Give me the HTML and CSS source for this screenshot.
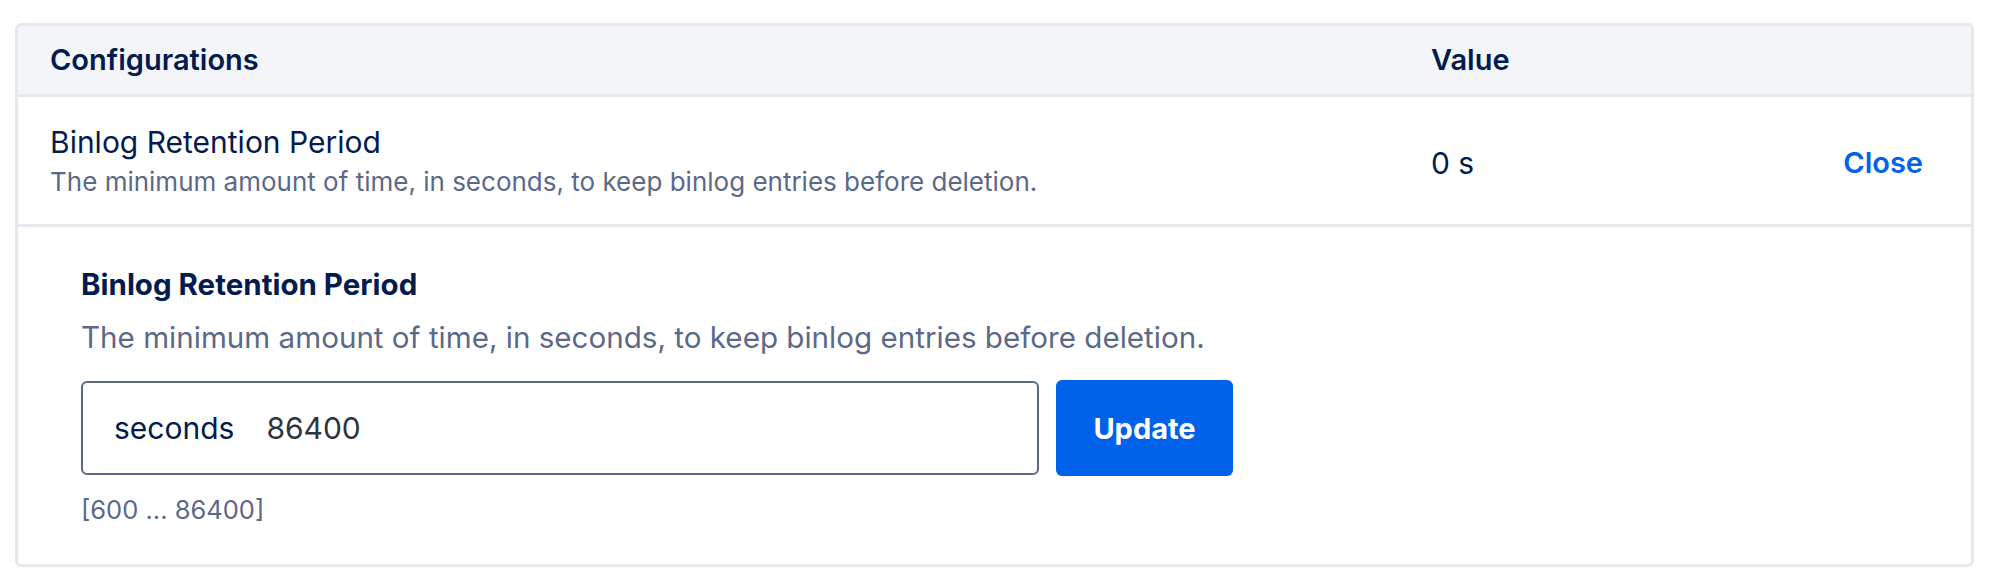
FILE: index.html
```html
<!DOCTYPE html>
<html lang="en">
<head>
<meta charset="utf-8">
<title>Configurations</title>
<link rel="stylesheet" href="styles.css">
</head>
<body>
<div class="card">
  <div class="row head">
    <div class="cell">Configurations</div>
    <div class="cell">Value</div>
  </div>
  <div class="row item">
    <div class="cell info">
      <div class="item-title">Binlog Retention Period</div>
      <div class="item-desc">The minimum amount of time, in seconds, to keep binlog entries before deletion.</div>
    </div>
    <div class="cell value">
      <span class="val">0 s</span>
      <a class="close" href="#">Close</a>
    </div>
  </div>
  <div class="editor">
    <div class="ed-title">Binlog Retention Period</div>
    <div class="ed-desc">The minimum amount of time, in seconds, to keep binlog entries before deletion.</div>
    <div class="ed-form">
      <label class="field">
        <span class="unit">seconds</span>
        <input class="num" type="text" value="86400">
      </label>
      <button class="btn" type="button">Update</button>
    </div>
    <div class="hint">[600 ... 86400]</div>
  </div>
</div>
</body>
</html>
```
FILE: styles.css
```css
* { box-sizing: border-box; }
html, body { background: #ffffff; }
body {
  margin: 0;
  padding: 23px 24px 0 15px;
  font-family: Inter, "Noto Sans", sans-serif;
  color: #031b4e;
}
.card {
  border: 3px solid #e5e8ed;
  border-radius: 6px;
  overflow: hidden;
  background: #ffffff;
}
.row {
  display: grid;
  grid-template-columns: 1fr 492px;
  align-items: center;
  padding: 0 48px 0 32px;
}
.head {
  height: 71px;
  background: #f3f5f9;
  border-bottom: 3px solid #e5e8ed;
  font-size: 29px;
  font-weight: 600;
  line-height: 36px;
}
.item {
  height: 130px;
  border-bottom: 3px solid #e5e8ed;
}
.item-title {
  font-size: 30px;
  line-height: 36px;
  font-weight: 400;
}
.item-desc {
  margin-top: 6px;
  font-size: 26px;
  line-height: 31px;
  color: #5b6987;
}
.value {
  display: flex;
  justify-content: space-between;
  align-items: center;
  padding-top: 4px;
  font-size: 30px;
  line-height: 36px;
}
.close {
  color: #0061eb;
  font-size: 29px;
  font-weight: 600;
  text-decoration: none;
}
.editor {
  padding: 39px 32px 39px 63px;
}
.ed-title {
  font-size: 29.5px;
  line-height: 36px;
  font-weight: 700;
}
.ed-desc {
  margin-top: 17px;
  font-size: 29.6px;
  line-height: 36px;
  color: #5b6987;
}
.ed-form {
  margin-top: 25px;
  display: flex;
  align-items: center;
  gap: 17px;
}
.field {
  width: 958px;
  height: 94px;
  border: 2px solid #5b6987;
  border-radius: 6px;
  display: flex;
  align-items: center;
  padding-left: 31px;
  gap: 32px;
  font-size: 30px;
}
.unit { color: #031b4e; }
.num {
  flex: 1;
  border: 0;
  outline: 0;
  padding: 0;
  background: transparent;
  font: inherit;
  color: #2e3440;
}
.btn {
  width: 177px;
  height: 96px;
  border: 0;
  border-radius: 6px;
  background: #0061eb;
  color: #ffffff;
  font-family: inherit;
  font-size: 29px;
  font-weight: 700;
  padding: 0;
}
.hint {
  margin-top: 19px;
  font-size: 25.5px;
  line-height: 30px;
  color: #5b6987;
}
```
